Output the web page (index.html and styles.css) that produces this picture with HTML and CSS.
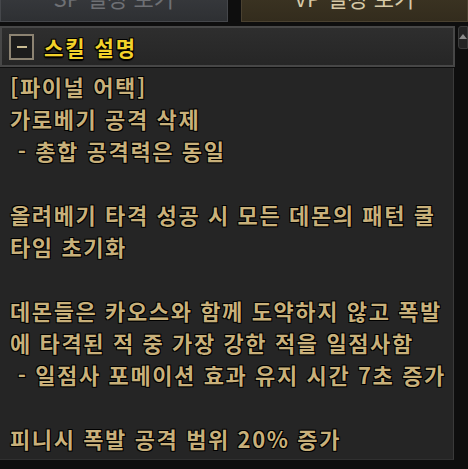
FILE: index.html
```html
<!DOCTYPE html>
<html lang="ko">
<head>
    <meta charset="UTF-8">
    <title>스킬 설명</title>
    <link rel="stylesheet" href="styles.css">
</head>
<body>
    <div class="tabs">
        <div class="tab">SP 설정 보기</div>
        <div class="tab active">VP 설정 보기</div>
    </div>
    <div class="main">
        <div class="column">
            <div class="header">
                <span class="toggle"><span class="minus"></span></span>
                <span class="title">스킬 설명</span>
            </div>
            <div class="panel">
                <p>[파이널 어택]<br>가로베기 공격 삭제<br>&nbsp;- 총합 공격력은 동일</p>
                <p>올려베기 타격 성공 시 모든 데몬의 패턴 쿨<br>타임 초기화</p>
                <p>데몬들은 카오스와 함께 도약하지 않고 폭발<br>에 타격된 적 중 가장 강한 적을 일점사함<br>&nbsp;- 일점사 포메이션 효과 유지 시간 7초 증가</p>
                <p>피니시 폭발 공격 범위 20% 증가</p>
            </div>
        </div>
        <div class="scrollbar">
            <div class="scroll-up">
                <svg width="8" height="6" viewBox="0 0 8 6"><path d="M0 6 L4 1 L8 6 Z" fill="#8a8a8a"/></svg>
            </div>
        </div>
    </div>
</body>
</html>
```

FILE: styles.css
```css
body {
    margin: 0;
    background: #0e0e0e;
    font-family: "Noto Sans CJK KR", "Noto Sans", sans-serif;
    width: 468px;
    height: 469px;
    overflow: hidden;
}
.tabs {
    display: flex;
    gap: 13px;
    height: 23px;
    overflow: hidden;
}
.tab {
    flex: 1;
    background: linear-gradient(#3a3c40, #2e3033);
    border: 1px solid #45474b;
    border-top: none;
    color: #6e7074;
    font-size: 22px;
    line-height: 22px;
    text-align: center;
    margin-top: -14px;
    height: 36px;
    box-sizing: border-box;
}
.tab.active {
    background: linear-gradient(#3e3624, #332c1d);
    border-color: #4a4130;
    color: #d6c9a6;
}
.main {
    display: flex;
    margin-top: 3px;
}
.column {
    width: 455px;
}
.header {
    height: 41px;
    box-sizing: border-box;
    border: 2px solid #474747;
    background: linear-gradient(#2e2e2e, #262626);
    display: flex;
    align-items: center;
    padding-left: 7px;
    gap: 10px;
}
.toggle {
    width: 25px;
    height: 26px;
    box-sizing: border-box;
    border: 2px solid #8c8372;
    background: #1c1c1c;
    display: flex;
    align-items: center;
    justify-content: center;
}
.minus {
    width: 10px;
    height: 2px;
    background: #c9bb92;
}
.title {
    color: #f2d22a;
    font-size: 21px;
    font-weight: bold;
    letter-spacing: 2px;
    text-shadow: -1px -1px 0 #000, 1px -1px 0 #000, -1px 1px 0 #000, 1px 1px 0 #000, 0 2px 1px #000;
}
.panel {
    width: 454px;
    height: 392px;
    margin-top: 1px;
    box-sizing: border-box;
    background: #252525;
    border-right: 1px solid #3a3a3a;
    border-bottom: 1px solid #303030;
    padding: 2px 0 0 10px;
    color: #c8b07a;
    font-size: 22px;
    font-weight: bold;
    line-height: 32px;
    letter-spacing: 1.6px;
    text-shadow: -1px -1px 0 #000, 1px -1px 0 #000, -1px 1px 0 #000, 1px 1px 0 #000;
}
.panel p {
    margin: 0 0 32px;
}
.scrollbar {
    margin-left: 3px;
    width: 10px;
}
.scroll-up {
    height: 23px;
    background: #242424;
    border: 1px solid #3c3c3c;
    border-radius: 3px 0 0 3px;
    display: flex;
    justify-content: center;
    padding-top: 6px;
    box-sizing: border-box;
}
```
